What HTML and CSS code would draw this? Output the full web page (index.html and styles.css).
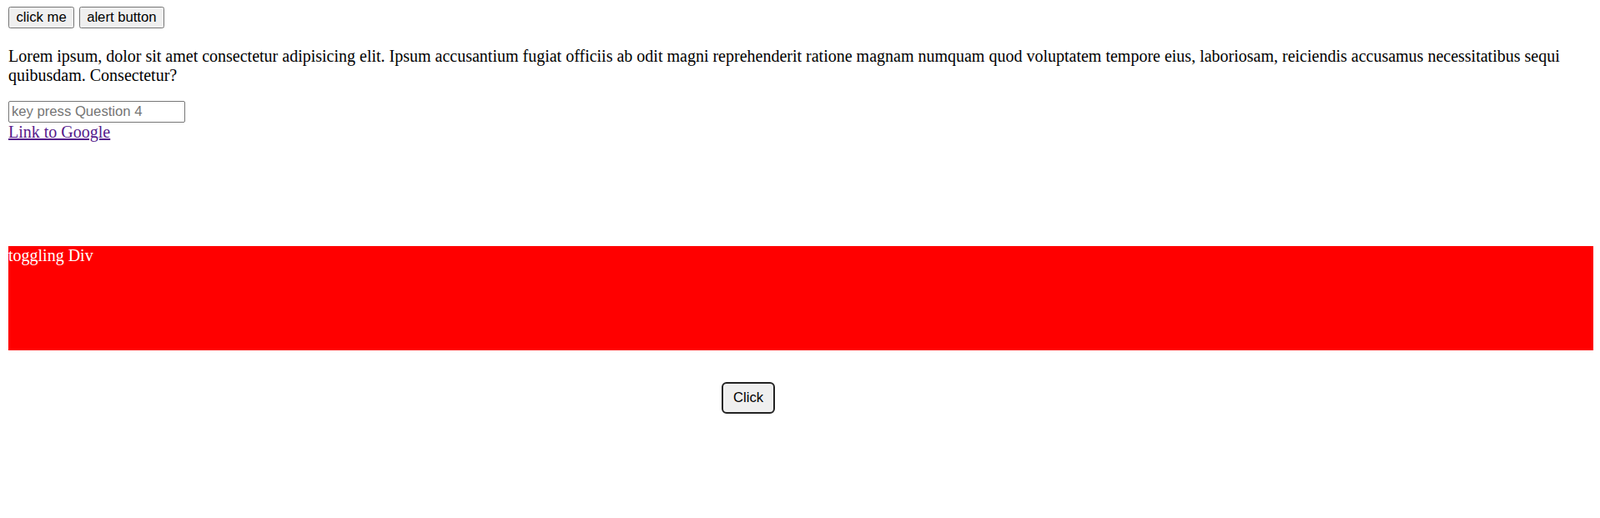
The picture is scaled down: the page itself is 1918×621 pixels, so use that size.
FILE: index.html
```html
<!DOCTYPE html>
<html>
<head>
<meta charset="utf-8">
<link rel="stylesheet" href="styles.css">
</head>
<body>
<div class="actions">
  <button class="btn">click me</button>
  <button class="btn">alert button</button>
</div>
<p class="text">Lorem ipsum, dolor sit amet consectetur adipisicing elit. Ipsum accusantium fugiat officiis ab odit magni reprehenderit ratione magnam numquam quod voluptatem tempore eius, laboriosam, reiciendis accusamus necessitatibus sequi quibusdam. Consectetur?</p>
<div class="field"><input class="input" type="text" placeholder="key press Question 4"></div>
<div class="linkrow"><a class="link" href="#">Link to Google</a></div>
<div class="toggle">toggling Div</div>
<div class="bottom"><button class="click">Click</button></div>
</body>
</html>
```
FILE: styles.css
```css
html, body {
  margin: 0;
  background: #fff;
}
body {
  padding: 8px 8px 0 10px;
  font-family: "Liberation Serif", "Times New Roman", serif;
  font-size: 20px;
  line-height: 23px;
  color: #000;
}
.actions {
  display: flex;
  gap: 5.5px;
  height: 28px;
}
.btn {
  height: 26px;
  padding: 0 8.5px;
  margin: 0;
  font-family: "Liberation Sans", Arial, sans-serif;
  font-size: 16.67px;
  color: #000;
  background: #efefef;
  border: 1.25px solid #767676;
  border-radius: 2.5px;
}
.text {
  margin: 20px 0 19px 0;
}
.field {
  display: flex;
}
.input {
  width: 212px;
  height: 26px;
  box-sizing: border-box;
  margin: 0;
  padding: 1px 3px;
  font-family: "Liberation Sans", Arial, sans-serif;
  font-size: 16.67px;
  border: 1.25px solid #767676;
  border-radius: 2px;
}
.input::placeholder {
  color: #757575;
}
.linkrow {
  height: 23px;
}
.link {
  color: #551a8b;
  text-decoration: underline;
}
.toggle {
  margin-top: 125px;
  height: 125px;
  background: #ff0000;
  color: #fff;
}
.bottom {
  display: flex;
  padding: 38px 0 0 855px;
}
.click {
  width: 64px;
  height: 38px;
  padding: 0;
  margin: 0;
  font-family: "Liberation Sans", Arial, sans-serif;
  font-size: 16.67px;
  color: #000;
  background: #efefef;
  border: 2.5px solid #222;
  border-radius: 6px;
}
```
